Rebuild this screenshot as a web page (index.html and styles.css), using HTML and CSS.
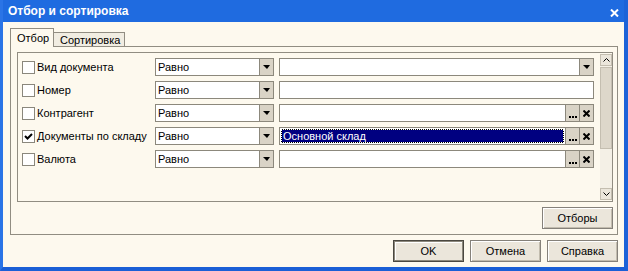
FILE: index.html
```html
<!DOCTYPE html>
<html lang="ru">
<head>
    <meta charset="UTF-8">
    <title>Отбор и сортировка</title>
    <link rel="stylesheet" href="styles.css">
</head>
<body>
    <div class="window">
        <div class="titlebar">
            <span class="title">Отбор и сортировка</span>
            <span class="close">
                <svg width="9" height="8" viewBox="0 0 9 8"><path d="M1 0.5 L8 7.5 M8 0.5 L1 7.5" stroke="#fff" stroke-width="2"/></svg>
            </span>
        </div>
        <div class="content">
            <div class="tabs">
                <div class="tab tab-active">Отбор</div>
                <div class="tab">Сортировка</div>
            </div>
            <div class="tab-panel">
                <div class="grid-box">
                    <div class="rows">
                        <div class="row">
                            <div class="check"><span class="box"></span>Вид документа</div>
                            <div class="field combo"><span class="text">Равно</span><span class="btn"><i class="arrow"></i></span></div>
                            <div class="field value"><span class="text"></span><span class="btn"><i class="arrow"></i></span></div>
                        </div>
                        <div class="row">
                            <div class="check"><span class="box"></span>Номер</div>
                            <div class="field combo"><span class="text">Равно</span><span class="btn"><i class="arrow"></i></span></div>
                            <div class="field value"><span class="text"></span></div>
                        </div>
                        <div class="row">
                            <div class="check"><span class="box"></span>Контрагент</div>
                            <div class="field combo"><span class="text">Равно</span><span class="btn"><i class="arrow"></i></span></div>
                            <div class="field value"><span class="text"></span><span class="btn btn-dots"><svg width="8" height="2" viewBox="0 0 8 2"><rect x="0" width="2" height="2"/><rect x="3" width="2" height="2"/><rect x="6" width="2" height="2"/></svg></span><span class="btn"><svg width="7" height="7" viewBox="0 0 7 7"><path d="M0.5 0.5 L6.5 6.5 M6.5 0.5 L0.5 6.5" stroke="#000" stroke-width="2"/></svg></span></div>
                        </div>
                        <div class="row">
                            <div class="check"><span class="box"><svg width="11" height="11" viewBox="0 0 11 11"><path d="M2 5 L4.5 7.5 L9 3" fill="none" stroke="#000" stroke-width="2"/></svg></span>Документы по складу</div>
                            <div class="field combo"><span class="text">Равно</span><span class="btn"><i class="arrow"></i></span></div>
                            <div class="field value"><span class="text selected">Основной склад</span><span class="btn btn-dots"><svg width="8" height="2" viewBox="0 0 8 2"><rect x="0" width="2" height="2"/><rect x="3" width="2" height="2"/><rect x="6" width="2" height="2"/></svg></span><span class="btn"><svg width="7" height="7" viewBox="0 0 7 7"><path d="M0.5 0.5 L6.5 6.5 M6.5 0.5 L0.5 6.5" stroke="#000" stroke-width="2"/></svg></span></div>
                        </div>
                        <div class="row">
                            <div class="check"><span class="box"></span>Валюта</div>
                            <div class="field combo"><span class="text">Равно</span><span class="btn"><i class="arrow"></i></span></div>
                            <div class="field value"><span class="text"></span><span class="btn btn-dots"><svg width="8" height="2" viewBox="0 0 8 2"><rect x="0" width="2" height="2"/><rect x="3" width="2" height="2"/><rect x="6" width="2" height="2"/></svg></span><span class="btn"><svg width="7" height="7" viewBox="0 0 7 7"><path d="M0.5 0.5 L6.5 6.5 M6.5 0.5 L0.5 6.5" stroke="#000" stroke-width="2"/></svg></span></div>
                        </div>
                    </div>
                    <div class="scrollbar">
                        <div class="scroll-btn"><svg width="7" height="4" viewBox="0 0 7 4"><path d="M0.5 3.5 L3.5 0.5 L6.5 3.5" fill="none" stroke="#000" stroke-width="1"/></svg></div>
                        <div class="scroll-track"><div class="scroll-thumb"></div></div>
                        <div class="scroll-btn"><svg width="7" height="4" viewBox="0 0 7 4"><path d="M0.5 0.5 L3.5 3.5 L6.5 0.5" fill="none" stroke="#000" stroke-width="1"/></svg></div>
                    </div>
                </div>
                <div class="panel-footer">
                    <div class="button">Отборы</div>
                </div>
            </div>
            <div class="dialog-footer">
                <div class="button button-default">OK</div>
                <div class="button">Отмена</div>
                <div class="button">Справка</div>
            </div>
        </div>
    </div>
</body>
</html>
```

FILE: styles.css
```css
body {
    margin: 0;
    font-family: "Liberation Sans", Arial, sans-serif;
    font-size: 11px;
    color: #000;
}
.window {
    width: 628px;
    height: 271px;
    box-sizing: border-box;
    display: flex;
    flex-direction: column;
    background-color: #1f6be0;
    border-left: 3px solid #2a74e6;
    border-right: 4px solid #1c63d8;
    border-bottom: 4px solid #1a5fd6;
}
.titlebar {
    height: 22px;
    display: flex;
    align-items: center;
    justify-content: space-between;
    padding: 0 5px 0 5px;
}
.title {
    color: #fff;
    font-weight: bold;
    font-size: 12px;
}
.close {
    display: flex;
    margin-top: 4px;
}
.content {
    flex: 1;
    background-color: #fdf9ee;
    padding: 6px 6px 0 7px;
    display: flex;
    flex-direction: column;
}
.tabs {
    display: flex;
    align-items: flex-end;
    height: 19px;
}
.tab {
    height: 15px;
    width: 71px;
    box-sizing: border-box;
    border-top: 1px solid #918d82;
    border-right: 1px solid #918d82;
    background-color: #f1ede2;
    padding: 1px 0 0 6px;
}
.tab-active {
    position: relative;
    z-index: 1;
    height: 19px;
    width: 44px;
    border-left: 1px solid #918d82;
    background-color: #fdf9ee;
    padding: 3px 0 0 6px;
}
.tab-panel {
    margin-top: -1px;
    border: 1px solid #918d82;
    padding: 5px 4px 5px 6px;
    display: flex;
    flex-direction: column;
    gap: 5px;
}
.grid-box {
    height: 150px;
    box-sizing: border-box;
    border: 1px solid #918d82;
    padding: 1px 0;
    display: flex;
}
.rows {
    flex: 1;
    padding: 4px 0 0 4px;
    display: flex;
    flex-direction: column;
    gap: 5px;
}
.row {
    display: flex;
    align-items: center;
    height: 18px;
}
.check {
    width: 133px;
    display: flex;
    align-items: center;
    gap: 2px;
    white-space: nowrap;
}
.box {
    width: 13px;
    height: 13px;
    box-sizing: border-box;
    border: 1px solid #8a877c;
    background-color: #fff;
    display: flex;
    align-items: center;
    justify-content: center;
}
.field {
    height: 18px;
    box-sizing: border-box;
    border: 1px solid #8c887c;
    background-color: #fff;
    display: flex;
}
.combo {
    width: 119px;
    margin-right: 5px;
}
.value {
    width: 315px;
}
.text {
    flex: 1;
    padding-left: 2px;
    line-height: 16px;
    white-space: nowrap;
}
.text.selected {
    margin: 1px;
    padding-left: 1px;
    line-height: 12px;
    color: #fff;
    border: 1px dotted #fff;
    background: linear-gradient(#000080, #000080) padding-box, #000 border-box;
}
.btn {
    width: 14px;
    box-sizing: border-box;
    border-left: 1px solid #8c887c;
    background-color: #d9d3c6;
    display: flex;
    align-items: center;
    justify-content: center;
}
.btn-dots {
    align-items: flex-end;
    padding-bottom: 3px;
}
.arrow {
    width: 0;
    height: 0;
    border-left: 4px solid transparent;
    border-right: 3px solid transparent;
    border-top: 4px solid #000;
}
.scrollbar {
    width: 12px;
    display: flex;
    flex-direction: column;
}
.scroll-btn {
    height: 12px;
    box-sizing: border-box;
    border: 1px solid #c4beb0;
    background-color: #ebe6db;
    display: flex;
    align-items: center;
    justify-content: center;
}
.scroll-track {
    flex: 1;
    background-color: #f4f0e6;
    padding: 1px 0;
}
.scroll-thumb {
    height: 82px;
    box-sizing: border-box;
    border: 1px solid #c4beb0;
    background-color: #ddd7ca;
}
.panel-footer {
    display: flex;
    justify-content: flex-end;
}
.dialog-footer {
    display: flex;
    justify-content: flex-end;
    gap: 6px;
    padding-top: 5px;
}
.button {
    width: 71px;
    height: 22px;
    box-sizing: border-box;
    display: flex;
    align-items: center;
    justify-content: center;
    background-color: #ebe6db;
    border: 1px solid #85817a;
    box-shadow: inset 1px 1px #fff, inset -1px -1px #c2bcae;
}
.button-default {
    border-color: #4a4740;
    box-shadow: inset 0 0 0 1px #8c887c, inset 2px 2px #fff;
}
```
